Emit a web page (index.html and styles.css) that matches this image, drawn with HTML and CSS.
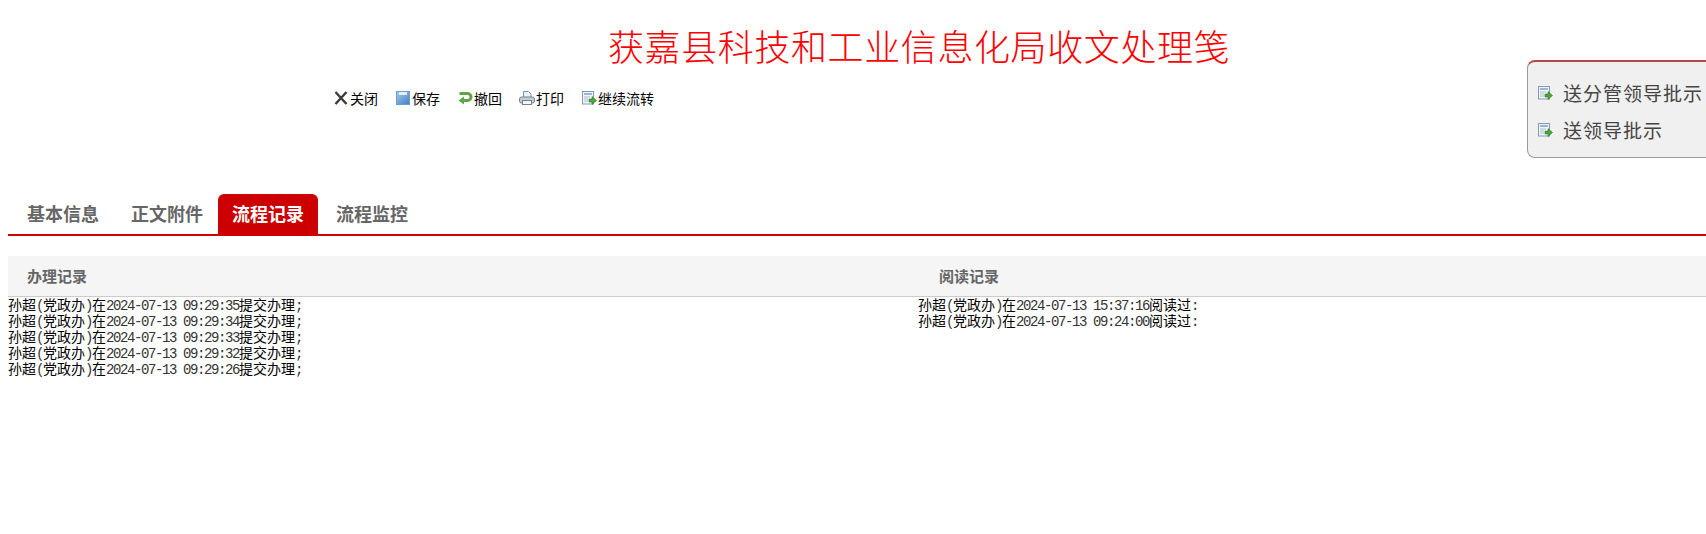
FILE: index.html
```html
<!DOCTYPE html>
<html>
<head>
    <meta charset="UTF-8">
    <title>收文处理笺</title>
    <link rel="stylesheet" href="styles.css">
</head>
<body>
    <svg class="defs" width="0" height="0">
        <defs>
            <linearGradient id="blue" x1="0" y1="0" x2="1" y2="1">
                <stop offset="0" stop-color="#a9cdee"/>
                <stop offset="1" stop-color="#3f7fc0"/>
            </linearGradient>
            <symbol id="i-next" viewBox="0 0 16 16">
                <rect x="1.5" y="1.5" width="11" height="12.5" fill="#f2f5f8" stroke="#7d9cbc"/>
                <rect x="3" y="3" width="8" height="2" fill="#9db7d2"/>
                <path d="M3 7h6M3 9h4M3 11h4" stroke="#b3bec9"/>
                <path d="M8 9h3V6.5l4.5 4-4.5 4V12H8z" fill="#4ea33c" stroke="#2f7d28" stroke-width=".6"/>
            </symbol>
        </defs>
    </svg>

    <h1 class="title">获嘉县科技和工业信息化局收文处理笺</h1>

    <div class="toolbar">
        <a class="tool">
            <svg width="16" height="16" viewBox="0 0 16 16"><path d="M2.5 2l11 12M13.5 2l-11 12" stroke="#3a3a3a" stroke-width="2.4"/></svg>关闭
        </a>
        <a class="tool">
            <svg width="16" height="16" viewBox="0 0 16 16"><rect x="1.5" y="1.5" width="13" height="13" fill="url(#blue)" stroke="#6f9cc8"/><rect x="4" y="2" width="8" height="3" fill="#e4eef8"/></svg>保存
        </a>
        <a class="tool">
            <svg width="16" height="16" viewBox="0 0 16 16"><path d="M2.5 3.5h8a3.5 3.5 0 0 1 0 7H6" fill="none" stroke="#5fa548" stroke-width="3"/><path d="M7 6.5v8L1.5 10.5z" fill="#5fa548"/></svg>撤回
        </a>
        <a class="tool">
            <svg width="16" height="16" viewBox="0 0 16 16"><path d="M4.5 7V1.5h5l2.5 2.5v3" fill="#e8f0f8" stroke="#7f93a8"/><rect x=".5" y="7" width="15" height="6" rx="2" fill="#c4ccd4" stroke="#76808a"/><rect x="3.5" y="10.5" width="9" height="4" fill="#f4f6f8" stroke="#76808a"/></svg>打印
        </a>
        <a class="tool">
            <svg width="16" height="16"><use href="#i-next"/></svg>继续流转
        </a>
    </div>

    <div class="float-menu">
        <a class="float-item"><svg width="16" height="16"><use href="#i-next"/></svg>送分管领导批示</a>
        <a class="float-item"><svg width="16" height="16"><use href="#i-next"/></svg>送领导批示</a>
    </div>

    <ul class="tabs">
        <li class="tab tab-first">基本信息</li>
        <li class="tab">正文附件</li>
        <li class="tab active">流程记录</li>
        <li class="tab">流程监控</li>
    </ul>

    <div class="records">
        <div class="record-head">办理记录</div>
        <div class="record-head head-right">阅读记录</div>
        <div class="record-list">
            <div class="record">孙超<span class="num">(</span>党政办<span class="num">)</span>在<span class="num">2024-07-13 09:29:35</span>提交办理<span class="num">;</span></div>
            <div class="record">孙超<span class="num">(</span>党政办<span class="num">)</span>在<span class="num">2024-07-13 09:29:34</span>提交办理<span class="num">;</span></div>
            <div class="record">孙超<span class="num">(</span>党政办<span class="num">)</span>在<span class="num">2024-07-13 09:29:33</span>提交办理<span class="num">;</span></div>
            <div class="record">孙超<span class="num">(</span>党政办<span class="num">)</span>在<span class="num">2024-07-13 09:29:32</span>提交办理<span class="num">;</span></div>
            <div class="record">孙超<span class="num">(</span>党政办<span class="num">)</span>在<span class="num">2024-07-13 09:29:26</span>提交办理<span class="num">;</span></div>
        </div>
        <div class="record-list">
            <div class="record">孙超<span class="num">(</span>党政办<span class="num">)</span>在<span class="num">2024-07-13 15:37:16</span>阅读过<span class="num">:</span></div>
            <div class="record">孙超<span class="num">(</span>党政办<span class="num">)</span>在<span class="num">2024-07-13 09:24:00</span>阅读过<span class="num">:</span></div>
        </div>
    </div>
</body>
</html>
```

FILE: styles.css
```css
body {
    margin: 0;
    padding-left: 8px;
    height: 534px;
    overflow: hidden;
    background: #fff;
    font-family: "Liberation Serif", "Noto Sans CJK SC", serif;
    font-size: 14px;
    color: #000;
}
.defs {
    display: block;
    height: 0;
}
.title {
    margin: 0;
    padding: 27px 0 0 600px;
    height: 44px;
    line-height: 44px;
    font-size: 36px;
    font-weight: 300;
    letter-spacing: 0.6px;
    color: #f00;
    white-space: nowrap;
}
.toolbar {
    display: flex;
    gap: 17px;
    margin-top: 17px;
    padding-left: 325px;
    height: 20px;
    line-height: 20px;
    font-family: "Noto Sans CJK SC", sans-serif;
}
.tool {
    display: flex;
    align-items: center;
    gap: 1px;
}
.float-menu {
    position: absolute;
    top: 60px;
    left: 1527px;
    right: 0;
    padding-top: 12px;
    box-sizing: border-box;
    height: 98px;
    background: #f0f0f0;
    border: 1px solid #999;
    border-top: 2px solid #b04a4a;
    border-right: none;
    border-radius: 8px 0 0 8px;
    font-family: "Noto Sans CJK SC", sans-serif;
    font-size: 19px;
    letter-spacing: 1px;
    color: #444;
}
.float-item {
    display: flex;
    align-items: center;
    gap: 10px;
    height: 37px;
    padding-left: 9px;
    white-space: nowrap;
}
.tabs {
    display: flex;
    margin: 86px 0 0;
    padding: 0;
    list-style: none;
    height: 40px;
    border-bottom: 2px solid #c00;
}
.tab {
    width: 100px;
    height: 40px;
    line-height: 38px;
    margin-left: 4px;
    text-align: center;
    font-family: "Noto Sans CJK SC", sans-serif;
    font-size: 18px;
    font-weight: 700;
    color: #666;
}
.tab-first {
    margin-left: 5px;
}
.tab.active {
    margin-left: 1px;
    margin-right: 4px;
    background: #c00;
    color: #fff;
    border-radius: 6px 6px 0 0;
}
.tab.active + .tab {
    margin-left: 0;
}
.records {
    display: grid;
    grid-template-columns: 910px 1fr;
    margin-top: 20px;
}
.record-head {
    height: 40px;
    line-height: 40px;
    padding-left: 19px;
    background: #f5f5f5;
    border-bottom: 1px solid #ccc;
    font-family: "Noto Sans CJK SC", sans-serif;
    font-size: 15px;
    font-weight: 700;
    color: #666;
}
.head-right {
    padding-left: 21px;
}
.record-list {
    font-family: "Liberation Mono", "Noto Sans CJK SC", monospace;
    padding-top: 1px;
    white-space: nowrap;
}
.record {
    height: 16px;
    line-height: 16px;
}
.num {
    letter-spacing: -1.4px;
    color: #333;
}
```
